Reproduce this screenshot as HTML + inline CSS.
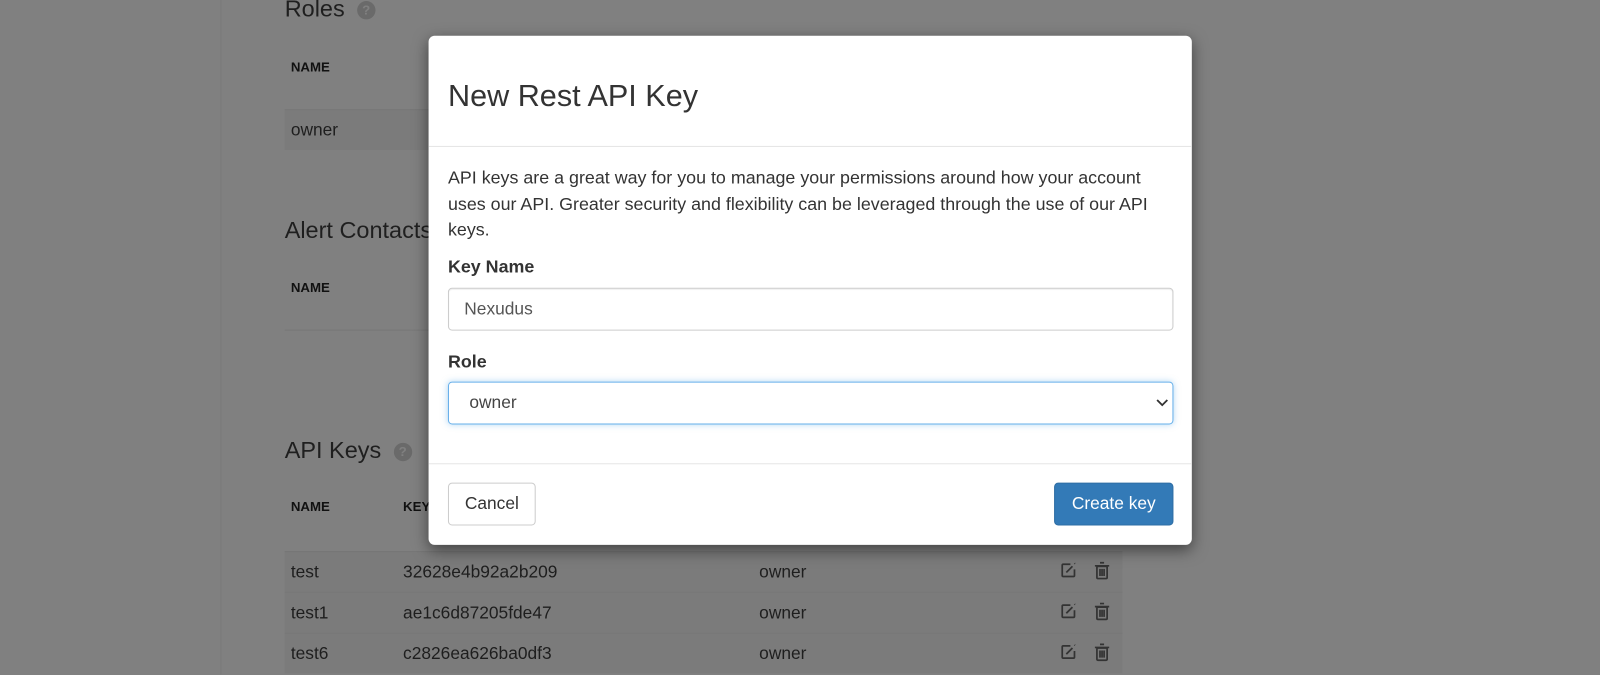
<!DOCTYPE html>
<html><head><style>
body{margin:0;width:1600px;height:661px;overflow:hidden;background:#808080;font-family:"Liberation Sans",sans-serif;position:relative;color:#1a1a1a}
#w{position:absolute;left:0;top:0;width:1568px;height:648px;transform:scale(1.0204);transform-origin:0 0}
.a{position:absolute}
.th{font-weight:bold;font-size:13px;color:#111}
.row{position:absolute;left:279px;width:821px;height:39px;background:#7b7b7b;border-top:1px solid #777}
.row span{position:absolute;top:10px;font-size:17px;color:#1e1e1e}
.q{display:inline-block;width:18px;height:18px;border-radius:50%;background:#6a6a6a;color:#808080;font-size:13px;font-weight:bold;text-align:center;line-height:18px;vertical-align:middle;margin-left:12px}
.modal{position:absolute;left:420px;top:35px;width:748px;height:499px;background:#fff;border-radius:6px;box-shadow:0 5px 15px rgba(0,0,0,.5)}
.ico{position:absolute}
</style></head><body><div id="w">
<div class="a" style="left:216px;top:0;width:1px;height:661px;background:#7a7a7a"></div>
<div class="a" style="left:279px;top:-5px;font-size:23px;color:#1f1f1f">Roles<span class="q">?</span></div>
<div class="a th" style="left:285px;top:58px">NAME</div>
<div class="row" style="top:107px"><span style="left:6px">owner</span></div>
<div class="a" style="left:279px;top:212px;font-size:23px;color:#1f1f1f">Alert Contacts</div>
<div class="a th" style="left:285px;top:274px">NAME</div>
<div class="a" style="left:279px;top:323px;width:821px;height:1px;background:#777"></div>
<div class="a" style="left:279px;top:428px;font-size:23px;color:#1f1f1f">API Keys<span class="q">?</span></div>
<div class="a th" style="left:285px;top:489px">NAME</div>
<div class="a th" style="left:395px;top:489px">KEY</div>
<div class="row" style="top:540px"><span style="left:6px">test</span><span style="left:116px">32628e4b92a2b209</span><span style="left:465px">owner</span></div>
<div class="row" style="top:580px"><span style="left:6px">test1</span><span style="left:116px">ae1c6d87205fde47</span><span style="left:465px">owner</span></div>
<div class="row" style="top:620px"><span style="left:6px">test6</span><span style="left:116px">c2826ea626ba0df3</span><span style="left:465px">owner</span></div>
<svg class="ico" style="left:1038px;top:550px" width="60" height="100" viewBox="0 0 60 100" fill="none" stroke="#333" stroke-width="1.7">
<g id="ic"><path d="M11 3H4a1 1 0 0 0-1 1v10a1 1 0 0 0 1 1h10a1 1 0 0 0 1-1V8"/><path d="M7 11l6-6"/><path d="M15 2l.5.5"/><rect x="37" y="5" width="10" height="12" rx="1"/><path d="M35 4.5h14M40 1.5h4M40 7.5v7M42 7.5v7M44 7.5v7"/></g>
<use href="#ic" y="40"/><use href="#ic" y="80"/>
</svg>
<div class="modal">
<div class="a" style="left:19px;top:43px;font-size:30px;color:#333">New Rest API Key</div>
<div class="a" style="left:0;top:108px;width:748px;height:1px;background:#e5e5e5"></div>
<div class="a" style="left:19px;top:127px;width:700px;font-size:17.5px;line-height:25.5px;color:#333">API keys are a great way for you to manage your permissions around how your account uses our API. Greater security and flexibility can be leveraged through the use of our API keys.</div>
<div class="a" style="left:19px;top:216px;font-size:17.5px;font-weight:bold;color:#333">Key Name</div>
<div class="a" style="left:19px;top:247px;width:709px;height:40px;border:1px solid #ccc;border-radius:4px;box-shadow:inset 0 1px 1px rgba(0,0,0,.08)"><span class="a" style="left:15px;top:10px;font-size:17px;color:#555">Nexudus</span></div>
<div class="a" style="left:19px;top:309px;font-size:17.5px;font-weight:bold;color:#333">Role</div>
<div class="a" style="left:19px;top:339px;width:709px;height:40px;border:1px solid #66afe9;border-radius:4px;box-shadow:0 0 6px rgba(102,175,233,.5)"><span class="a" style="left:20px;top:10px;font-size:17px;color:#444">owner</span>
<svg class="a" style="right:4px;top:15px" width="12" height="10"><path d="M1 2l5 5 5-5" stroke="#333" stroke-width="1.8" fill="none"/></svg></div>
<div class="a" style="left:0;top:419px;width:748px;height:1px;background:#e5e5e5"></div>
<div class="a" style="left:19px;top:438px;width:84px;height:40px;border:1px solid #ccc;border-radius:4px;font-size:17px;color:#333;text-align:center;line-height:40px">Cancel</div>
<div class="a" style="left:613px;top:438px;width:115px;height:40px;border:1px solid #2e6da4;border-radius:4px;background:#337ab7;font-size:17px;color:#fff;text-align:center;line-height:40px">Create key</div>
</div>
</div></body></html>
